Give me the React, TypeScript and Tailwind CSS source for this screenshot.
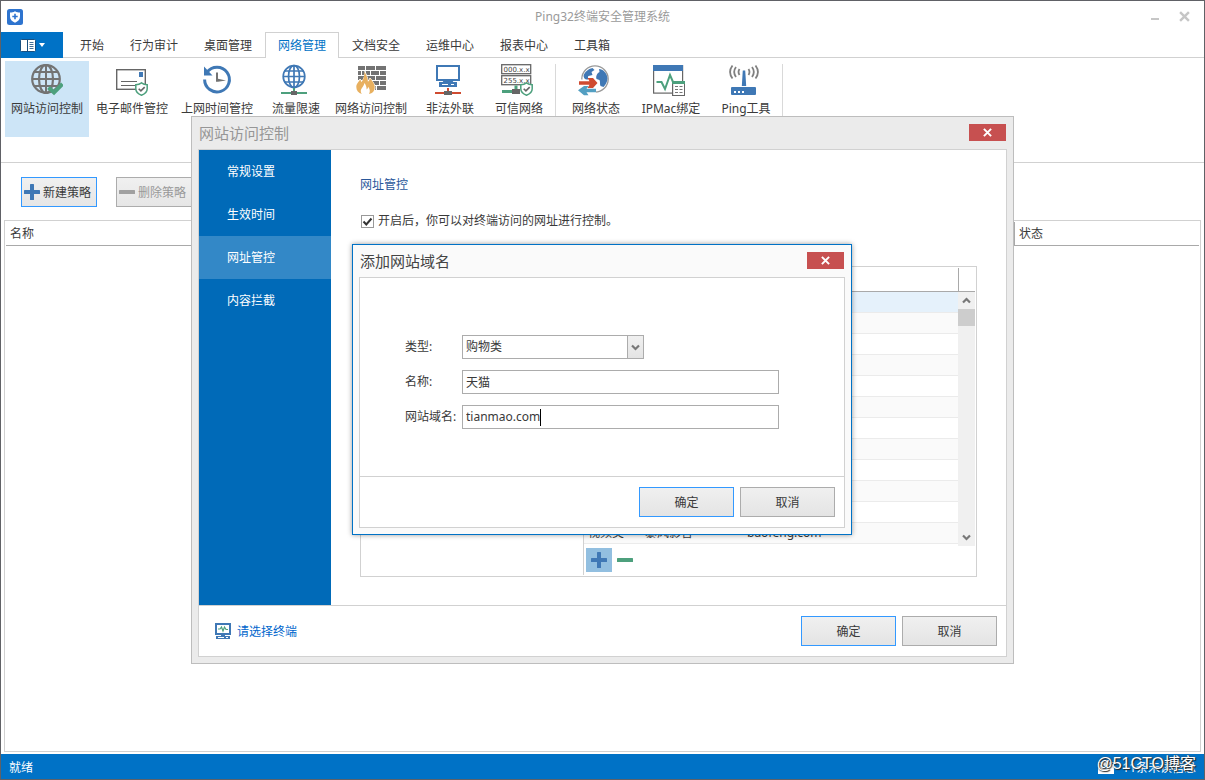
import type { ReactNode } from "react";

const tabs = ["开始", "行为审计", "桌面管理", "网络管理", "文档安全", "运维中心", "报表中心", "工具箱"];

function Globe() {
  return (
    <svg width="32" height="32" viewBox="0 0 32 32" fill="none" stroke="#737373" strokeWidth="2.200">
      <circle cx="15" cy="15" r="13.800" />
      <ellipse cx="15" cy="15" rx="7" ry="14" />
      <path d="M15 1v28M1 15h28M3.500 8h23M3.500 22h23" strokeWidth="2" />
      <path d="M17.500 23.500l5.500 5 8.500-8.500" stroke="#4da07d" strokeWidth="4" />
    </svg>
  );
}

function Shield({ x, y }: { x: number; y: number }) {
  return (
    <g transform={`translate(${x} ${y})`}>
      <path d="M6.500 .8c2 1.500 3.700 1.800 5.700 1.900v4c0 3-2.300 5.200-5.700 6.500C3.100 11.900.8 9.700.8 6.700v-4c2-.1 3.700-.4 5.700-1.900z" fill="#fff" stroke="#4da07d" strokeWidth="1.500" />
      <path d="M3.700 6.700l2.200 2.200 3.800-3.800" fill="none" stroke="#666" strokeWidth="1.600" />
    </g>
  );
}

function Mail() {
  return (
    <svg width="32" height="32" viewBox="0 0 32 32" fill="none">
      <rect x=".7" y="5.700" width="28.600" height="19.600" stroke="#666" strokeWidth="1.400" fill="#fff" />
      <rect x="23" y="8" width="4" height="5" fill="#3f78b5" />
      <path d="M5 17.500h16M5 21.500h16" stroke="#666" strokeWidth="1.200" />
      <Shield x={19} y={18} />
    </svg>
  );
}

function Clock() {
  return (
    <svg width="32" height="32" viewBox="0 0 32 32" fill="none">
      <path d="M6 8.200A12.400 12.400 0 1 1 3.600 15.500" stroke="#3f78b5" strokeWidth="3" />
      <path d="M3 2.500V11.500h8.500z" fill="#3f78b5" />
      <path d="M15 8.500h2v6.200l8 1.800-8 1.300h-2z" fill="#737373" />
    </svg>
  );
}

function NetGlobe() {
  return (
    <svg width="32" height="32" viewBox="0 0 32 32" fill="none">
      <g stroke="#3f78b5" strokeWidth="1.700">
        <circle cx="16" cy="12.500" r="10.800" />
        <ellipse cx="16" cy="12.500" rx="5.500" ry="11" />
        <path d="M16 1.500v22M5 12.500h22M6.500 7h19M6.500 18h19" />
      </g>
      <path d="M16 24v3" stroke="#4da07d" strokeWidth="2" />
      <path d="M3 29h26" stroke="#4da07d" strokeWidth="2" />
      <rect x="13" y="27" width="6" height="4" fill="#666" />
    </svg>
  );
}

function Firewall() {
  return (
    <svg width="32" height="32" viewBox="0 0 32 32">
      <path d="M3 2h7v4H3zM11 2h9v4h-9zM21 2h10v4H21zM3 7h3v4H3zM7 7h8v4H7zM16 7h8v4h-8zM25 7h6v4h-6zM11 12h9v4h-9zM21 12h10v4H21zM3 12h7v4H3zM16 17h8v4h-8zM25 17h6v4h-6zM19 22h2v4h-2zM22 22h9v4h-9z" fill="#737373" />
      <path d="M10 7c1 4 3 7 3 10 1-.8 1.700-2 2-3 2.500 3.500 5 6 5 9.500 0 3.500-2.500 6.500-6 6.500H7c-3.500 0-6-3-6-6.500 0-4 3-5.500 4-8.500 1 .8 1.200 1.800 1.500 2.500C9 15 10.500 11 10 7z" fill="#fff" stroke="#fff" />
      <path d="M9.500 7.500c1.500 3 3.700 7 3.400 10.300 1.200-.8 1.800-2.200 2-3.800C17.500 17.500 20 20 19.700 23.500 19.500 27 17.500 29.500 14 30c1.500-2.500.8-5-.8-7.200-.2 1.500-.8 2.300-1.600 2.700.1-2.500-.8-5-2.400-6.500.2 3.500-3.700 5-3.400 8.500.1 1 .4 1.800 1 2.500C3.500 29 1.300 26.500 1.300 23c0-3.500 2.500-5 3.700-7.500.9.800 1.100 1.700 1.300 2.800C8.800 15.300 9.500 11.500 9.500 7.500z" fill="#e8b05f" />
    </svg>
  );
}

function Outreach() {
  return (
    <svg width="32" height="32" viewBox="0 0 32 32" fill="none">
      <rect x="5" y="2" width="22" height="14" stroke="#3f78b5" strokeWidth="2" />
      <path d="M12 16h8l2 3H10z" fill="#3f78b5" />
      <rect x="7" y="18" width="18" height="5" fill="#3f78b5" />
      <path d="M10 20.500h6M19 20.500h3" stroke="#fff" strokeWidth="1.200" />
      <path d="M16 24v4M3 29h26" stroke="#cf4b30" strokeWidth="2" />
      <rect x="12" y="27" width="8" height="4" fill="#666" />
    </svg>
  );
}

function Trusted() {
  return (
    <svg width="32" height="32" viewBox="0 0 32 32" fill="none">
      <rect x=".7" y=".7" width="29" height="9" stroke="#666" strokeWidth="1.300" />
      <rect x=".7" y="11.700" width="29" height="9" stroke="#666" strokeWidth="1.300" />
      <text x="2.500" y="8" fontSize="7" fontFamily="DejaVu Sans, sans-serif" fill="#444">000.x.x</text>
      <text x="2.500" y="19" fontSize="7" fontFamily="DejaVu Sans, sans-serif" fill="#444">255.x.x</text>
      <path d="M15 21.500v3.500M1 27.500h14" stroke="#4da07d" strokeWidth="3" />
      <rect x="11" y="25" width="8" height="5" fill="#666" />
      <Shield x={19} y={18} />
    </svg>
  );
}

function NetState() {
  return (
    <svg width="32" height="32" viewBox="0 0 32 32" fill="none">
      <circle cx="17" cy="15" r="13.200" stroke="#999" strokeWidth="1.300" fill="#fff" />
      <path d="M14.500 4C10 5 6.500 8 5.500 12c.5 3 2 3.500 4 4.500h2c0-2-2-2.500-1-4.500l4-1-1-3 3-2zM21 5c4 0 8 4 8.500 9 0 4-2 7-4 9l-3-1c-1-2 0-4-1-6l-3-1c-1-3 1-6 3-7z" fill="#3f78b5" />
      <path d="M0 15.500h10v-3h6l6 6.500-5 4h2v3h-1v4H0z" fill="#fff" />
      <path d="M1 17.200h10.500L9.500 14h5.500l4.500 5-4.500 5H9.500l2-3.200H1z" fill="#cf4b30" />
      <path d="M18 24.700H8.500l2-2.700H6l-6 4.200 6 5h4.500l-2-3H18z" fill="#539fc2" />
    </svg>
  );
}

function IpMac() {
  return (
    <svg width="32" height="32" viewBox="0 0 32 32" fill="none">
      <rect x=".6" y="1.600" width="29" height="27.500" stroke="#666" strokeWidth="1.200" fill="#fff" />
      <path d="M0 1h30v6H0z" fill="#3f78b5" />
      <path d="M3.500 18h5l3.500 7 5-14 3 7h2" stroke="#4da07d" strokeWidth="2" />
      <rect x="19.600" y="17.600" width="12" height="14" stroke="#666" strokeWidth="1.200" fill="#fff" />
      <path d="M19 17h13v3H19z" fill="#4da07d" />
      <path d="M22 22.500h3M26.500 22.500h3M22 25.500h3M26.500 25.500h3M22 28.500h3M26.500 28.500h3" stroke="#777" />
    </svg>
  );
}

function Router() {
  return (
    <svg width="32" height="32" viewBox="0 0 32 32" fill="none">
      <path d="M14.800 6.500h2.400l1 15.500h-4.400z" fill="#3f78b5" />
      <rect x="3" y="23" width="25" height="8" rx="1" fill="#3f78b5" />
      <path d="M6 27h2v2H6zM10 27h2v2h-2zM14 27h2v2h-2z" fill="#fff" />
      <g stroke="#808080" strokeWidth="1.800">
        <path d="M4.500 1.500c-3 4-3 9 0 13M8 3c-2.200 3-2.200 7 0 10M11.500 5c-1.300 2-1.300 4 0 6M27.500 1.500c3 4 3 9 0 13M24 3c2.200 3 2.200 7 0 10M20.500 5c1.300 2 1.300 4 0 6" />
      </g>
    </svg>
  );
}

function Cross({ size }: { size: number }) {
  return (
    <svg width={size} height={size} viewBox="0 0 10 10" fill="none" stroke="currentColor" strokeWidth="2.200">
      <path d="M1 1l8 8M9 1L1 9" />
    </svg>
  );
}

function Plus() {
  return (
    <svg width="16" height="16" viewBox="0 0 16 16" fill="#3f78b5">
      <rect x="6" width="4" height="16" rx=".5" />
      <rect y="6" width="16" height="4" rx=".5" />
    </svg>
  );
}

function Minus({ color }: { color: string }) {
  return (
    <svg width="16" height="16" viewBox="0 0 16 16" fill={color}>
      <rect y="6" width="16" height="4" rx=".5" />
    </svg>
  );
}

function Chevron({ up = false }: { up?: boolean }) {
  return (
    <svg width="9" height="7" viewBox="0 0 9 7" fill="none" stroke="#777" strokeWidth="2.200">
      <path d={up ? "M1 5.500l3.500-3.500L8 5.500" : "M1 1.500L4.500 5 8 1.500"} />
    </svg>
  );
}

type Tool = { label: string; icon: ReactNode; active?: boolean; size: string };

const groupA: Tool[] = [
  { label: "网站访问控制", icon: <Globe />, active: true, size: "w-[84px]" },
  { label: "电子邮件管控", icon: <Mail />, size: "w-[84px]" },
  { label: "上网时间管控", icon: <Clock />, size: "w-[84px]" },
  { label: "流量限速", icon: <NetGlobe />, size: "w-[68px] [&>span]:pl-1" },
  { label: "网络访问控制", icon: <Firewall />, size: "w-[84px]" },
  { label: "非法外联", icon: <Outreach />, size: "w-[68px] [&>span]:pl-1" },
  { label: "可信网络", icon: <Trusted />, size: "w-[68px] [&>span]:pl-1" },
];

const groupB: Tool[] = [
  { label: "网络状态", icon: <NetState />, size: "w-[68px] [&>span]:pl-1" },
  { label: "IPMac绑定", icon: <IpMac />, size: "w-[80px] [&>span]:pl-1" },
  { label: "Ping工具", icon: <Router />, size: "w-[68px] [&>span]:pl-1" },
];

function ToolGroup({ tools }: { tools: Tool[] }) {
  return (
    <div className="flex gap-px">
      {tools.map((t) => (
        <button
          key={t.label}
          type="button"
          className={`flex h-[76px] shrink-0 flex-col items-center gap-[5px] whitespace-nowrap pt-[3px] ${t.size} ${t.active ? "bg-[#cde5f7]" : ""}`}
        >
          {t.icon}
          <span className="leading-4">{t.label}</span>
        </button>
      ))}
    </div>
  );
}

function ActionButtons() {
  return (
    <div className="ml-auto flex gap-1.5">
      <button type="button" className="h-[30px] w-[95px] border border-[#3399ff] bg-linear-to-b from-[#f0f0f0] to-[#e4e4e4] pt-0.5">确定</button>
      <button type="button" className="h-[30px] w-[95px] border border-[#acacac] bg-linear-to-b from-[#f0f0f0] to-[#e4e4e4] pt-0.5">取消</button>
    </div>
  );
}

function Dialog({ title, frame, heading, children }: { title: string; frame: string; heading: string; children: ReactNode }) {
  return (
    <section role="dialog" aria-label={title} className={`flex flex-col border px-1.5 pb-1.5 ${frame}`}>
      <header className="flex h-8 shrink-0 items-start justify-between pr-px">
        <h2 className={`pl-px text-[15px] leading-8 ${heading}`}>{title}</h2>
        <button type="button" aria-label="关闭" className="mt-[7px] flex h-[17px] w-[37px] items-center justify-center bg-[#c75050] text-white">
          <Cross size={9} />
        </button>
      </header>
      <div className="flex grow flex-col border border-[#d1d1d1] bg-white">{children}</div>
    </section>
  );
}

const sideItems = ["常规设置", "生效时间", "网址管控", "内容拦截"];
const rows: string[][] = [...Array.from({ length: 11 }, () => ["", "", ""]), ["视频类", "暴风影音", "baofeng.com"]];

function SiteDialog() {
  return (
    <Dialog title="网站访问控制" frame="h-[548px] w-[823px] border-[#bdbdbd] bg-[#ebebeb]" heading="text-[#969696]">
      <div className="flex grow">
        <nav className="flex w-[132px] shrink-0 flex-col bg-[#006ab8] text-white">
          {sideItems.map((s) => (
            <button key={s} type="button" className={`h-[43px] pl-7 text-left ${s === "网址管控" ? "bg-[#3388c7]" : ""}`}>
              {s}
            </button>
          ))}
        </nav>
        <div className="flex grow flex-col px-[29px] pt-[26px] pb-7">
          <h3 className="leading-[18px] text-[#2a579a]">网址管控</h3>
          <label className="mt-[18px] flex h-[18px] items-center gap-1 pl-px">
            <span className="relative flex">
              <input type="checkbox" defaultChecked className="peer size-[13px] appearance-none border border-[#999] bg-white" />
              <svg width="13" height="13" viewBox="0 0 13 13" className="pointer-events-none absolute inset-0 hidden peer-checked:block" fill="none" stroke="#333" strokeWidth="2">
                <path d="M2.500 6.500l2.800 3L10.500 3.500" />
              </svg>
            </span>
            开启后，你可以对终端访问的网址进行控制。
          </label>
          <div className="mt-9 flex grow border border-[#d1d1d1]">
            <div className="mb-px w-[223px] shrink-0 border-r border-[#d1d1d1]" />
            <div className="flex grow flex-col pr-px">
              <div className="mt-px flex h-6 shrink-0 border-b border-[#a9a9a9]">
                <div className="grow border-r border-[#a9a9a9]" />
                <div className="w-4" />
              </div>
              <div className="flex items-start">
                <table className="grow table-fixed border-separate border-spacing-0">
                  <tbody>
                    {rows.map((r, i) => (
                      <tr key={i} className={`h-[21px] [&>td]:border-b [&>td]:border-[#ebebeb] ${i === 0 ? "bg-[#e5f1fb]" : i % 2 ? "bg-[#fafafa]" : ""}`}>
                        <td className="w-[57px] py-0 pl-1 leading-5">{r[0]}</td>
                        <td className="w-[102px] py-0 pl-1 leading-5">{r[1]}</td>
                        <td className="py-0 pl-1 leading-5">{r[2]}</td>
                      </tr>
                    ))}
                  </tbody>
                </table>
                <div className="flex h-[254px] w-[17px] shrink-0 flex-col items-center bg-[#f0f0f0]">
                  <div className="flex h-[17px] items-center"><Chevron up /></div>
                  <div className="h-[17px] w-full bg-[#cdcdcd]" />
                  <div className="mt-auto flex h-[17px] items-center"><Chevron /></div>
                </div>
              </div>
              <div className="mt-0.5 flex gap-[5px] pl-0.5">
                <button type="button" aria-label="添加" className="flex h-6 w-[26px] items-center justify-center bg-[#92bfe0]"><Plus /></button>
                <button type="button" aria-label="删除" className="flex h-6 items-center"><Minus color="#4da07d" /></button>
              </div>
            </div>
          </div>
        </div>
      </div>
      <footer className="flex h-[51px] shrink-0 items-center border-t border-[#d1d1d1] pr-[9px] pl-4">
        <a href="#terminal" className="flex items-center gap-1.5 text-[#0066cc]">
          <svg width="16" height="16" viewBox="0 0 16 16" fill="none">
            <rect x="1" y="1" width="14" height="10" stroke="#3f78b5" strokeWidth="2" />
            <path d="M3 6h2l1.500-2L8 8l1.500-4L11 6.500h2" stroke="#4da07d" strokeWidth="1.200" />
            <rect x="6" y="11" width="4" height="2" fill="#3f78b5" />
            <rect x="1" y="13" width="14" height="3" fill="#3f78b5" />
            <path d="M3 14.500h6M11 14.500h2" stroke="#fff" />
          </svg>
          <span className="pt-0.5">请选择终端</span>
        </a>
        <ActionButtons />
      </footer>
    </Dialog>
  );
}

function DomainDialog() {
  return (
    <Dialog title="添加网站域名" frame="h-[291px] w-[500px] border-[#0072c6] bg-[#fafafa] shadow-[0_0_5px_rgba(0,0,0,0.4)]" heading="text-[#444]">
      <div className="flex grow flex-col gap-[11px] pt-[57px] pl-[45px]">
        <div className="flex h-6 items-center">
          <label htmlFor="kind" className="w-[57px] shrink-0">类型:</label>
          <div className="relative h-6 w-[182px]">
            <select id="kind" className="h-6 w-full appearance-none border border-[#acacac] bg-white pl-[3px] leading-4">
              <option>购物类</option>
            </select>
            <div className="pointer-events-none absolute inset-y-0 right-0 flex w-[17px] items-center justify-center border border-[#acacac] bg-linear-to-b from-[#f0f0f0] to-[#e4e4e4]">
              <Chevron />
            </div>
          </div>
        </div>
        <div className="flex h-6 items-center">
          <label htmlFor="name" className="w-[57px] shrink-0">名称:</label>
          <input id="name" defaultValue="天猫" className="h-6 w-[317px] border border-[#acacac] pl-[3px]" />
        </div>
        <div className="flex h-6 items-center">
          <label htmlFor="domain" className="w-[57px] shrink-0">网站域名:</label>
          <div className="flex h-6 w-[317px] items-center border border-[#acacac] pl-[3px]">
            <input id="domain" defaultValue="tianmao.com" className="field-sizing-content caret-transparent outline-none" />
            <span className="h-[17px] w-px bg-black" />
          </div>
        </div>
      </div>
      <footer className="flex h-[51px] shrink-0 items-center border-t border-[#d1d1d1] pr-[9px]">
        <ActionButtons />
      </footer>
    </Dialog>
  );
}

export default function App() {
  return (
    <div className="relative flex min-h-screen flex-col border border-[#606166] bg-white font-['Noto_Sans','Noto_Sans_CJK_SC',sans-serif] text-xs text-[#3a3a3a]">
      <header className="flex h-[31px] items-center px-1.5">
        <div className="flex flex-1">
          <svg width="16" height="16" viewBox="0 0 16 16">
            <rect width="16" height="16" rx="2.500" fill="#2e74cf" />
            <path d="M8 2.300c1.800 1 3.200 1.300 5 1.300v4c0 3-1.800 4.800-5 6.200-3.200-1.400-5-3.200-5-6.200v-4c1.800 0 3.200-.3 5-1.300z" fill="#fff" />
            <path d="M7.200 4.800h1.600v1.900h1.900v1.600H8.800v1.900H7.200V8.300H5.300V6.700h1.900z" fill="#2e74cf" />
          </svg>
        </div>
        <h1 className="text-[#9a9a9a]">Ping32终端安全管理系统</h1>
        <div className="flex flex-1 justify-end text-[#c6c6c6]">
          <div className="flex items-center gap-5 pr-2">
            <button type="button" aria-label="最小化" className="mt-1 h-0.5 w-2 bg-[#c6c6c6]" />
            <button type="button" aria-label="关闭"><Cross size={11} /></button>
          </div>
        </div>
      </header>

      <div className="flex h-[26px] shrink-0">
        <button type="button" aria-label="文件" className="flex w-[62px] shrink-0 items-center justify-center gap-[3px] bg-[#0072c6]">
          <svg width="16" height="13" viewBox="0 0 16 13">
            <rect x=".5" y=".5" width="15" height="12" rx="1" fill="#fff" stroke="#174f80" />
            <path d="M7.500 1v11" stroke="#174f80" />
            <path d="M9.500 3.500h4M9.500 5.500h4M9.500 7.500h4M9.500 9.500h4" stroke="#446f95" />
          </svg>
          <svg width="6" height="4" viewBox="0 0 6 4" fill="#fff"><path d="M0 0h6L3 4z" /></svg>
        </button>
        <nav className="flex grow">
          <div className="w-1 border-b border-[#d1d1d1]" />
          {tabs.map((t) => (
            <button
              key={t}
              type="button"
              className={
                t === "网络管理"
                  ? "border border-b-0 border-[#d1d1d1] px-3 text-[#0072c6]"
                  : "border-b border-[#d1d1d1] px-[13px] pt-0.5"
              }
            >
              {t}
            </button>
          ))}
          <div className="grow border-b border-[#d1d1d1]" />
        </nav>
      </div>

      <div className="flex h-[105px] shrink-0 border-b border-[#d1d1d1] pt-[3px] pl-1">
        <ToolGroup tools={groupA} />
        <div className="mx-1 my-[3px] w-px bg-[#d9d9d9]" />
        <ToolGroup tools={groupB} />
        <div className="mx-1 my-[3px] w-px bg-[#d9d9d9]" />
      </div>

      <main className="flex grow flex-col px-[3px] pt-3.5 pb-0.5">
        <div className="flex gap-[19px] pl-[17px]">
          <button type="button" className="flex h-[30px] w-[76px] items-center gap-[3px] whitespace-nowrap border border-[#3399ff] bg-linear-to-b from-[#f0f0f0] to-[#e6e6e6] pl-0.5">
            <Plus />
            <span className="pt-0.5">新建策略</span>
          </button>
          <button type="button" disabled className="flex h-[30px] w-[76px] items-center gap-[3px] whitespace-nowrap border border-[#acacac] bg-linear-to-b from-[#f0f0f0] to-[#e6e6e6] pl-0.5 text-[#999]">
            <Minus color="#a0a0a0" />
            <span className="pt-0.5">删除策略</span>
          </button>
        </div>
        <div className="mt-[13px] grow border border-[#d1d1d1] p-px">
          <table className="w-full table-fixed border-separate border-spacing-0">
            <thead>
              <tr className="h-6 text-left">
                <th className="border-b border-[#a9a9a9] py-0 pl-1 font-normal">名称</th>
                <th className="w-[185px] border-b border-l border-[#a9a9a9] py-0 pl-1 font-normal">状态</th>
              </tr>
            </thead>
          </table>
        </div>
      </main>

      <footer className="flex h-[25px] shrink-0 items-center justify-between bg-[#0072c6] px-2 pt-0.5 text-white">
        <span>就绪</span>
        <span className="relative flex items-center gap-2">
          <svg width="16" height="12" viewBox="0 0 16 12">
            <rect width="16" height="12" fill="#fff" />
            <path d="M1 1l7 5 7-5" fill="none" stroke="#0072c6" strokeWidth="1.400" />
          </svg>
          11条未读信息
          <span className="absolute -top-1 right-0 whitespace-nowrap font-['Liberation_Sans','Noto_Sans_CJK_SC',sans-serif] text-base leading-4 text-white [text-shadow:1px_1px_1px_#222,0_0_2px_#444]">
            @51CTO博客
          </span>
        </span>
      </footer>

      <div className="absolute -inset-px flex items-center justify-center">
        <SiteDialog />
      </div>
      <div className="absolute -inset-px flex items-center justify-center pr-px pb-px">
        <DomainDialog />
      </div>
    </div>
  );
}
